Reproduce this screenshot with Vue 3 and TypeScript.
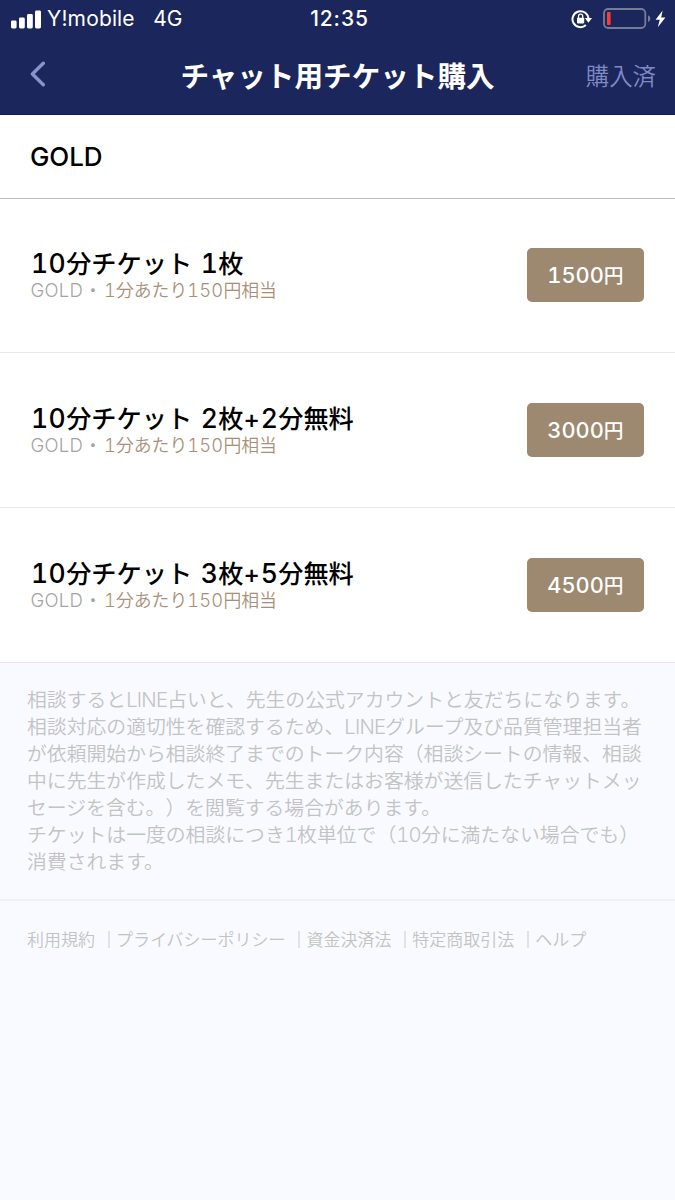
<script setup lang="ts">
import { h, type FunctionalComponent } from 'vue'

interface Ticket {
  id: number
  title: string
  price: string
}

const tickets: Ticket[] = [
  { id: 1, title: '10分チケット 1枚', price: '1500円' },
  { id: 2, title: '10分チケット 2枚+2分無料', price: '3000円' },
  { id: 3, title: '10分チケット 3枚+5分無料', price: '4500円' },
]

const notice: string[] = [
  '相談するとLINE占いと、先生の公式アカウントと友だちになります。',
  '相談対応の適切性を確認するため、LINEグループ及び品質管理担当者',
  'が依頼開始から相談終了までのトーク内容（相談シートの情報、相談',
  '中に先生が作成したメモ、先生またはお客様が送信したチャットメッ',
  'セージを含む。）を閲覧する場合があります。',
  'チケットは一度の相談につき1枚単位で（10分に満たない場合でも）',
  '消費されます。',
]

const links: string[] = ['利用規約', 'プライバシーポリシー', '資金決済法', '特定商取引法', 'ヘルプ']

// Sets digits and Latin words apart from the Japanese text so each can be spaced on its own.
const Mixed: FunctionalComponent<{ text: string }> = (props) =>
  props.text
    .split(/([0-9]+|[A-Z]+|\+)/)
    .filter(Boolean)
    .map((run) => {
      if (/^[0-9]/.test(run)) return h('span', { class: 'num' }, run)
      if (/^[A-Z]/.test(run)) return h('span', { class: 'latin' }, run)
      if (run === '+') return h('span', { class: 'plus' }, run)
      return run
    })
</script>

<template>
  <div class="screen">
    <header class="header">
      <div class="status">
        <div class="carrier">
          <svg width="31" height="19" viewBox="0 0 31 19" fill="#fff">
            <rect x="0" y="10.5" width="5.6" height="8" rx="1.4" />
            <rect x="8" y="7.5" width="5.8" height="11" rx="1.4" />
            <rect x="16" y="4" width="5.8" height="14.5" rx="1.4" />
            <rect x="24" y="0.5" width="6" height="18" rx="1.4" />
          </svg>
          <span class="name">Y!mobile</span>
          <span class="net">4G</span>
        </div>
        <span class="clock">12:35</span>
        <div class="power">
          <svg width="22" height="20" viewBox="0 0 22 20" fill="none">
            <path d="M14.9 16.1A8 8 0 1 1 17.5 10" stroke="#fff" stroke-width="2" />
            <path d="M13.8 9.1h7.2l-3.6 4.6z" fill="#fff" />
            <rect x="6" y="8.8" width="7.2" height="5.6" rx="0.8" fill="#fff" />
            <path d="M7.5 9V7.2a2.1 2.1 0 0 1 4.2 0V9" stroke="#fff" stroke-width="1.3" />
          </svg>
          <svg class="battery" width="48" height="22" viewBox="0 0 48 22" fill="none">
            <rect x="1" y="1" width="41.3" height="19" rx="4.2" stroke="#777d98" stroke-width="1.8" />
            <rect x="4" y="4" width="3.6" height="13" rx="1" fill="#ff3b30" />
            <path d="M45 7.2q2.4 1 2.4 3.4T45 14z" fill="#777d98" />
          </svg>
          <svg class="bolt" width="11" height="18" viewBox="0 0 11 18" fill="#fff">
            <path d="M7.6 0.5L0.6 9.7h4.1L2.8 17.2l7.6-9.6H6.2z" />
          </svg>
        </div>
      </div>
      <div class="nav">
        <svg class="back" width="16" height="26" viewBox="0 0 16 26" fill="none">
          <path d="M13.3 2.2L2.4 13l10.9 10.8" stroke="#8793cd" stroke-width="3.4" stroke-linecap="round" stroke-linejoin="round" />
        </svg>
        <h1>チャット用チケット購入</h1>
        <span class="bought">購入済</span>
      </div>
    </header>

    <h2 class="grade">GOLD</h2>

    <section v-for="t in tickets" :key="t.id" class="ticket">
      <div class="info">
        <div class="title"><Mixed :text="t.title" /></div>
        <div class="sub">
          <span class="gold"><Mixed text="GOLD" /></span><span class="dot">・</span><span class="rate"><Mixed text="1分あたり150円相当" /></span>
        </div>
      </div>
      <button class="buy" type="button"><Mixed :text="t.price" /></button>
    </section>

    <div class="notice">
      <div v-for="line in notice" :key="line"><Mixed :text="line" /></div>
    </div>

    <nav class="links">
      <a v-for="l in links" :key="l">{{ l }}</a>
    </nav>
  </div>
</template>

<style>
body {
  background: #f9faff;
}

.num,
.latin,
.plus {
  font-family: Inter, sans-serif;
  font-feature-settings: 'tnum' 1;
  line-height: 1;
}
</style>

<style scoped>
.screen {
  width: 675px;
  height: 1200px;
  overflow: hidden;
  background: #f9faff;
  font-family: 'Noto Sans CJK JP', sans-serif;
  color: #000;
  white-space: nowrap;
  text-spacing-trim: space-all;
}
.header {
  height: 115px;
  box-sizing: border-box;
  background: #1b265c;
  border-bottom: 1px solid #101a50;
}
.status {
  height: 38px;
  display: grid;
  grid-template-columns: 1fr auto 1fr;
  align-items: center;
  padding: 0 9px 0 11px;
  color: #fff;
  font: 400 21px/38px Inter, sans-serif;
}
.carrier,
.power {
  display: flex;
  align-items: center;
}
.name {
  margin-left: 5px;
  letter-spacing: 0.15px;
}
.net {
  margin-left: 18.5px;
}
.clock {
  font-weight: 500;
  letter-spacing: 0.9px;
  margin-left: 2px;
}
.power {
  justify-content: flex-end;
}
.battery {
  margin-left: 10px;
}
.bolt {
  margin-left: 4px;
}
.nav {
  height: 76px;
  display: grid;
  grid-template-columns: 80px 1fr 80px;
  align-items: center;
  padding: 0 19px 0 30px;
}
.back {
  margin-top: -4px;
}
h1 {
  margin: -2px 0 0 -11px;
  font-size: 28.6px;
  font-weight: 700;
  line-height: 74px;
  text-align: center;
  color: #fff;
}
.bought {
  justify-self: end;
  margin-top: -2px;
  color: #7f8ac4;
  font-size: 23.4px;
  font-weight: 350;
}
.grade {
  margin: 0;
  height: 83.6px;
  box-sizing: border-box;
  padding-left: 30px;
  border-bottom: 1px solid #bcbcbe;
  background: #fff;
  font: 500 26px/83px Inter, sans-serif;
  letter-spacing: -0.1px;
}
.ticket {
  height: 154.67px;
  box-sizing: border-box;
  display: flex;
  align-items: center;
  justify-content: space-between;
  padding: 0 31px 0 30px;
  background: #fff;
  border-bottom: 1px solid #e6e6ec;
}
.info {
  margin-top: -2px;
}
.title {
  padding-left: 1px;
  font-size: 25.2px;
  font-weight: 500;
  line-height: 30px;
  word-spacing: 3px;
}
.title :deep(.num) {
  font-size: 26.5px;
  letter-spacing: 0.4px;
}
.title :deep(.plus) {
  letter-spacing: 0.8px;
}
.sub {
  padding-left: 0.5px;
  font-size: 17.85px;
  font-weight: 350;
  line-height: 24px;
  color: #a4a4a4;
}
.sub :deep(.num),
.sub :deep(.latin) {
  font-weight: 300;
}
.sub :deep(.num) {
  font-size: 18.3px;
  letter-spacing: 0.2px;
}
.sub :deep(.latin) {
  font-size: 18.5px;
  letter-spacing: 0.25px;
}
.rate {
  color: #a89078;
}
.dot {
  margin: 0 2px 0 1px;
}
.buy {
  width: 117px;
  height: 54px;
  padding: 0;
  border: 0;
  border-radius: 5px;
  background: #9d8870;
  color: #fff;
  font: 500 19.8px/52px 'Noto Sans CJK JP', sans-serif;
}
.buy :deep(.num) {
  font-size: 21.8px;
}
.notice {
  height: 238px;
  box-sizing: border-box;
  padding: 22px 27px 0;
  border-bottom: 2px solid #f0f0f3;
  color: #c3c3c3;
  font-size: 19.83px;
  font-weight: 350;
  line-height: 27px;
}
.notice :deep(.num),
.notice :deep(.latin) {
  font-weight: 300;
  font-size: 20.3px;
  letter-spacing: -0.8px;
}
.links {
  display: flex;
  padding: 26px 27px 0;
  color: #c3c3c3;
  font-size: 17px;
  font-weight: 350;
  line-height: 24px;
}
.links a + a {
  margin-left: 12.9px;
  display: flex;
  align-items: center;
}
.links a + a::before {
  content: '';
  width: 2px;
  height: 17px;
  margin-right: 6px;
  margin-top: 2px;
  background: #e2e2e5;
}
</style>
